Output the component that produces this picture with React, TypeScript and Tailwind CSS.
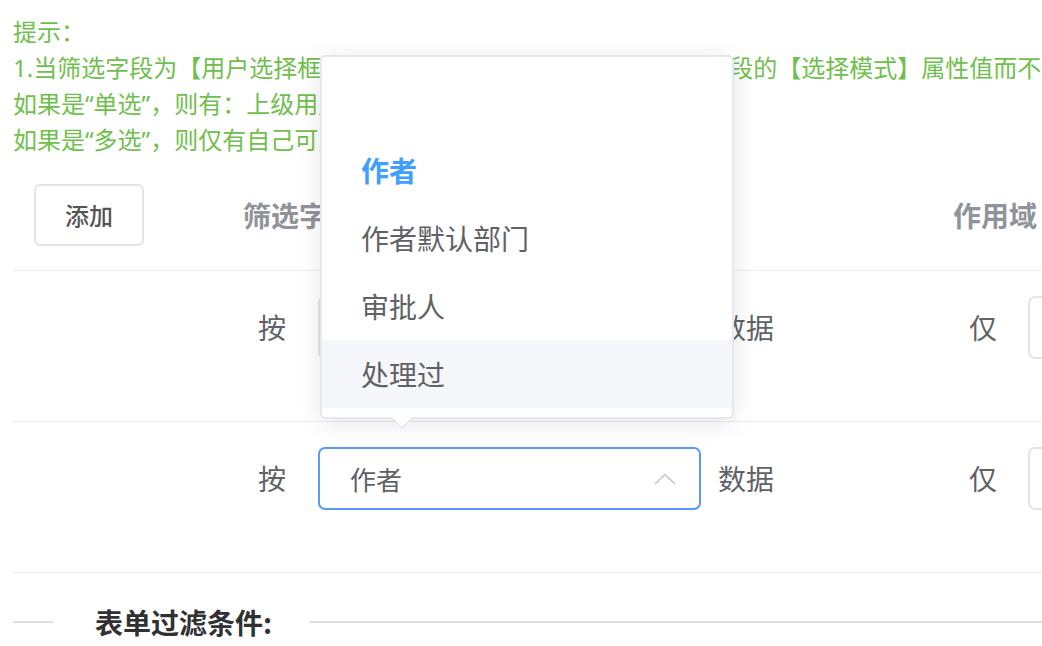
import React from "react";

const hints = [
  "提示：",
  "1.当筛选字段为【用户选择框】时，数据的可见范围将根据该筛选字段的【选择模式】属性值而不同：",
  "如果是“单选”，则有：上级用户、同部门用户及自己可见；",
  "如果是“多选”，则仅有自己可见。",
];

const options = ["", "作者", "作者默认部门", "审批人", "处理过"];

function ChevronUp() {
  return (
    <svg width="22" height="12" viewBox="0 0 22 12" fill="none">
      <polyline points="1,11 11,1.5 21,11" stroke="#c0c4cc" strokeWidth="1.6" />
    </svg>
  );
}

function FilterRow({ value, focused }: { value: string; focused?: boolean }) {
  return (
    <div className="flex h-[151px] items-start border-b border-[#ebeef5] pt-[25px]">
      <div className="w-[217px] shrink-0" />
      <div className="flex w-[710px] shrink-0 items-center pl-[28px] text-[28px] text-[#606266]">
        <span className="leading-[63px]">按</span>
        <div
          className={
            focused
              ? "ml-[32px] flex h-[63px] w-[383px] items-center justify-between rounded-[7px] border-2 border-[#579bf6] pl-[30px] pr-[23px]"
              : "ml-[32px] flex h-[63px] w-[383px] items-center justify-between rounded-[7px] border-2 border-[#e2e4ea] pl-[30px] pr-[23px]"
          }
        >
          <span className="text-[26px] text-[#606266]">{value}</span>
          <ChevronUp />
        </div>
        <span className="ml-[17px] leading-[63px]">数据</span>
      </div>
      <div className="flex shrink-0 items-center pl-[29px] text-[28px] text-[#606266]">
        <span className="leading-[63px]">仅</span>
        <div className="ml-[31px] h-[63px] w-[300px] rounded-[7px] border-2 border-[#e2e4ea]" />
      </div>
    </div>
  );
}

export default function App() {
  return (
    <div className="relative h-[646px] w-[1042px] overflow-hidden bg-white font-['Noto_Sans_CJK_SC','Noto_Sans',sans-serif]">
      <div className="pl-[13px] pt-[14px]">
        {/* usage notes */}
        <div className="whitespace-nowrap font-['Noto_Sans','Noto_Sans_CJK_SC',sans-serif] text-[24px] leading-[36px] text-[#6fbf4c]">
          {hints.map((h) => (
            <div key={h}>{h}</div>
          ))}
        </div>

        {/* filter table */}
        <div className="mt-[2px] w-[1300px]">
          <div className="flex h-[111px] items-center border-b border-[#ebeef5]">
            <div className="w-[217px] shrink-0 pl-[21px]">
              <button className="h-[62px] w-[110px] rounded-[6px] border-2 border-[#e2e4ea] bg-white text-[24px] font-medium text-[#555]">
                添加
              </button>
            </div>
            <div className="w-[710px] shrink-0 pl-[13px] text-[28px] font-bold text-[#909399]">
              筛选字段
            </div>
            <div className="shrink-0 pl-[13px] text-[28px] font-bold text-[#909399]">作用域</div>
          </div>
          <FilterRow value="" />
          <FilterRow value="作者" focused />
        </div>

        {/* section divider */}
        <div className="mt-[31px] flex h-[36px] w-[1300px] items-center">
          <div className="h-[2px] w-[40px] bg-[#dcdfe6]" />
          <div className="w-[257px] pl-[42px] text-[28px] font-bold leading-[36px] text-[#303133]">
            表单过滤条件:
          </div>
          <div className="h-[2px] flex-1 bg-[#dcdfe6]" />
        </div>
      </div>

      {/* open select dropdown */}
      <div className="absolute left-[320px] top-[55px] h-[364px] w-[414px] rounded-[6px] border-2 border-[#e6e8ee] bg-white pt-[11px] shadow-[0_4px_24px_rgba(0,0,0,0.1)]">
        {options.map((o, i) => (
          <div
            key={i}
            className={
              o === "作者"
                ? "h-[68px] pl-[39px] text-[28px] font-bold leading-[68px] text-[#409eff]"
                : o === "处理过"
                ? "h-[68px] bg-[#f5f7fa] pl-[39px] text-[28px] leading-[68px] text-[#606266]"
                : "h-[68px] pl-[39px] text-[28px] leading-[68px] text-[#606266]"
            }
          >
            {o}
          </div>
        ))}
      </div>
      <svg className="absolute left-[392px] top-[416px]" width="20" height="13" viewBox="0 0 20 13">
        <path d="M0 0 H20 V2 L10 12 L0 2 Z" fill="#ffffff" />
        <path d="M0 2 L10 12 L20 2" fill="none" stroke="#e6e8ee" strokeWidth="1.5" />
      </svg>
    </div>
  );
}
